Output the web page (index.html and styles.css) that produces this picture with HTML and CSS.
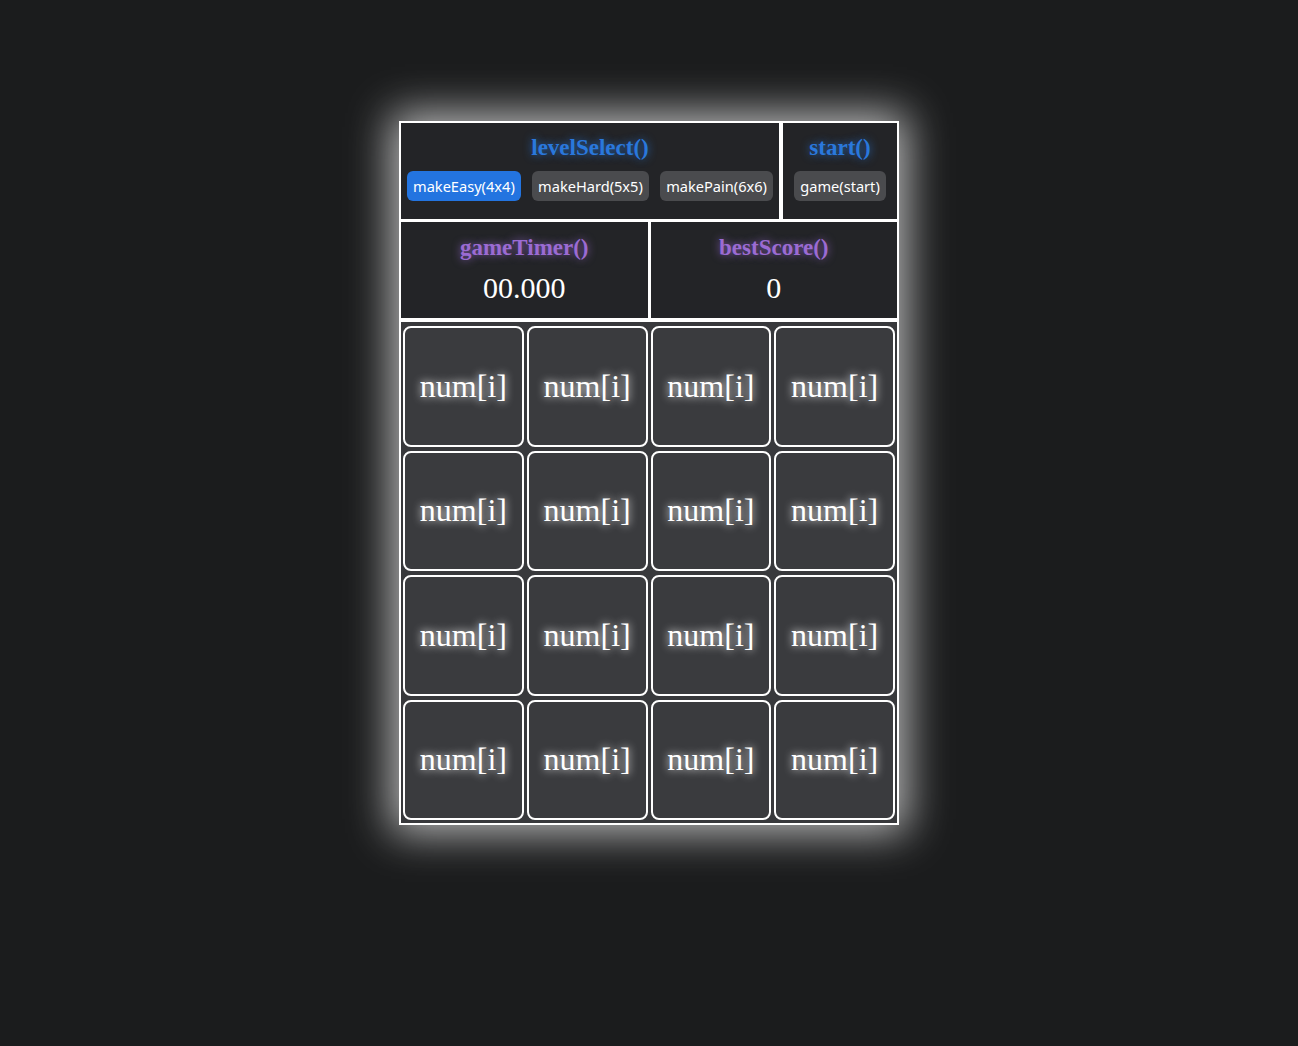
FILE: index.html
```html
<!DOCTYPE html>
<html lang="en">
<head>
    <meta charset="UTF-8">
    <meta name="viewport" content="width=device-width, initial-scale=1.0">
    <title>Number Game</title>
    <link rel="stylesheet" href="styles.css">
</head>
<body>
    <div class="board">
        <div class="row top">
            <div class="cell levels">
                <h2 class="title blue">levelSelect()</h2>
                <div class="buttons">
                    <button class="btn active">makeEasy(4x4)</button>
                    <button class="btn">makeHard(5x5)</button>
                    <button class="btn">makePain(6x6)</button>
                </div>
            </div>
            <div class="cell start">
                <h2 class="title blue">start()</h2>
                <div class="buttons center">
                    <button class="btn">game(start)</button>
                </div>
            </div>
        </div>
        <div class="row stats">
            <div class="cell">
                <h2 class="title purple">gameTimer()</h2>
                <div class="value">00.000</div>
            </div>
            <div class="cell">
                <h2 class="title purple">bestScore()</h2>
                <div class="value">0</div>
            </div>
        </div>
        <div class="grid">
            <div class="tile">num[i]</div>
            <div class="tile">num[i]</div>
            <div class="tile">num[i]</div>
            <div class="tile">num[i]</div>
            <div class="tile">num[i]</div>
            <div class="tile">num[i]</div>
            <div class="tile">num[i]</div>
            <div class="tile">num[i]</div>
            <div class="tile">num[i]</div>
            <div class="tile">num[i]</div>
            <div class="tile">num[i]</div>
            <div class="tile">num[i]</div>
            <div class="tile">num[i]</div>
            <div class="tile">num[i]</div>
            <div class="tile">num[i]</div>
            <div class="tile">num[i]</div>
        </div>
    </div>
</body>
</html>
```

FILE: styles.css
```css
html {
    background-color: #1b1c1d;
}

body {
    margin: 0;
    padding: 121px 0 0;
    min-height: 100vh;
    box-sizing: border-box;
    background-color: #1b1c1d;
    font-family: "Liberation Serif", "Times New Roman", serif;
    color: #fff;
}

.board {
    width: 496px;
    margin: 0 auto;
    border: 2px solid #fff;
    background-color: #fff;
    display: flex;
    flex-direction: column;
    box-shadow: 0 0 40px 8px rgba(255, 255, 255, 0.7);
}

.row {
    display: flex;
    height: 96px;
    gap: 4px;
}

.stats {
    margin-top: 3px;
    gap: 3px;
}

.cell {
    flex: 1;
    background-color: #232427;
    display: flex;
    flex-direction: column;
    align-items: center;
    padding-top: 12px;
    box-sizing: border-box;
}

.stats .cell {
    padding-top: 13px;
}

.levels {
    flex: 0 0 378px;
}

.title {
    margin: 0;
    font-size: 23px;
    font-weight: bold;
    line-height: 26px;
}

.blue {
    color: #2a78dc;
    text-shadow: 0 0 8px rgba(42, 120, 220, 0.8);
}

.purple {
    color: #9b6bd3;
    text-shadow: 0 0 8px rgba(155, 107, 211, 0.8);
}

.buttons {
    margin-top: 10px;
    width: 100%;
    box-sizing: border-box;
    padding: 0 6px;
    display: flex;
    justify-content: space-between;
}

.buttons.center {
    justify-content: center;
}

.btn {
    height: 30px;
    padding: 0 6px;
    border: none;
    border-radius: 6px;
    background-color: #4a4b4e;
    color: #fff;
    font-family: "Noto Sans", "Open Sans", sans-serif;
    font-size: 14.6px;
    cursor: pointer;
}

.btn.active {
    background-color: #2374e0;
}

.value {
    margin-top: 10px;
    font-family: "Liberation Serif", "Times New Roman", serif;
    font-size: 30px;
    line-height: 34px;
}

.grid {
    margin-top: 4px;
    height: 501px;
    box-sizing: border-box;
    background-color: #38393c;
    padding: 4px 2px 3px;
    display: grid;
    grid-template-columns: repeat(4, 1fr);
    grid-template-rows: repeat(4, 1fr);
    gap: 4px 3px;
}

.tile {
    border: 2px solid #fff;
    border-radius: 8px;
    background-color: #3a3b3e;
    display: flex;
    align-items: center;
    justify-content: center;
    font-size: 32px;
    text-shadow: 0 0 8px #fff;
}
```
